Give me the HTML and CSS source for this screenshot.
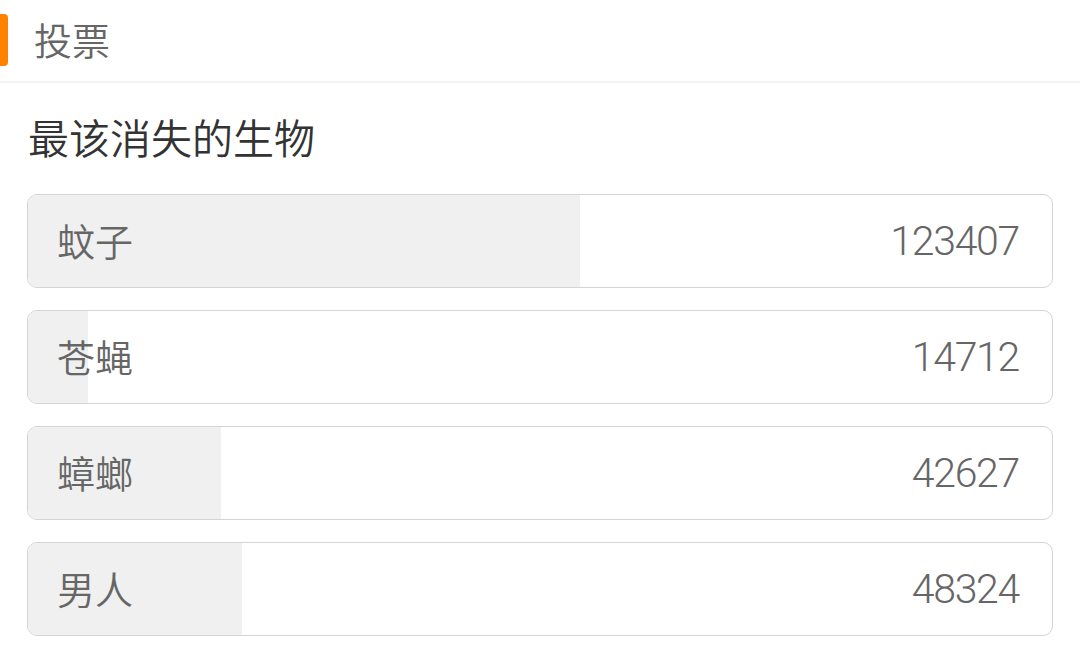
FILE: index.html
```html
<!DOCTYPE html>
<html lang="zh">
<head>
<meta charset="utf-8">
<link rel="stylesheet" href="styles.css">
</head>
<body>
<div class="header">
  <span class="accent"></span>
  <span class="title">投票</span>
</div>
<div class="content">
  <div class="question">最该消失的生物</div>
  <div class="options">
    <div class="option"><div class="fill" style="width:53.9%"></div><span class="label">蚊子</span><span class="count">123407</span></div>
    <div class="option"><div class="fill" style="width:5.9%"></div><span class="label">苍蝇</span><span class="count">14712</span></div>
    <div class="option"><div class="fill" style="width:18.8%"></div><span class="label">蟑螂</span><span class="count">42627</span></div>
    <div class="option"><div class="fill" style="width:20.9%"></div><span class="label">男人</span><span class="count">48324</span></div>
  </div>
</div>
</body>
</html>
```
FILE: styles.css
```css
html, body {
  margin: 0;
  padding: 0;
  background: #fff;
  font-family: "Noto Sans CJK SC", "Noto Sans", sans-serif;
}
.header {
  height: 81px;
  border-bottom: 2px solid #f2f2f2;
  display: flex;
  align-items: center;
  position: relative;
}
.accent {
  position: absolute;
  left: 0;
  top: 14px;
  width: 8px;
  height: 52px;
  background: #ff8200;
  border-radius: 0 4px 4px 0;
}
.title {
  margin-left: 34px;
  font-size: 38px;
  font-weight: 350;
  color: #666;
  line-height: 1;
  margin-top: -4px;
}
.content {
  padding: 0 27px 0 27px;
}
.question {
  font-size: 41px;
  font-weight: 350;
  color: #333;
  line-height: 1;
  margin-top: 33px;
  margin-left: 1px;
  height: 78px;
}
.options {
  display: flex;
  flex-direction: column;
  gap: 22px;
}
.option {
  position: relative;
  height: 92px;
  border: 1px solid #d4d4d4;
  border-radius: 10px;
  overflow: hidden;
  display: flex;
  align-items: center;
  justify-content: space-between;
  padding: 0 33px 0 29px;
}
.fill {
  position: absolute;
  left: 0;
  top: 0;
  bottom: 0;
  background: #f0f0f0;
}
.label, .count {
  position: relative;
  font-size: 38px;
  font-weight: 350;
  color: #666;
  line-height: 1;
}
.label {
  margin-top: -3px;
}
.count {
  font-family: "Roboto", "Noto Sans", sans-serif;
  font-size: 41px;
  font-weight: 300;
  letter-spacing: -1.3px;
}
```
